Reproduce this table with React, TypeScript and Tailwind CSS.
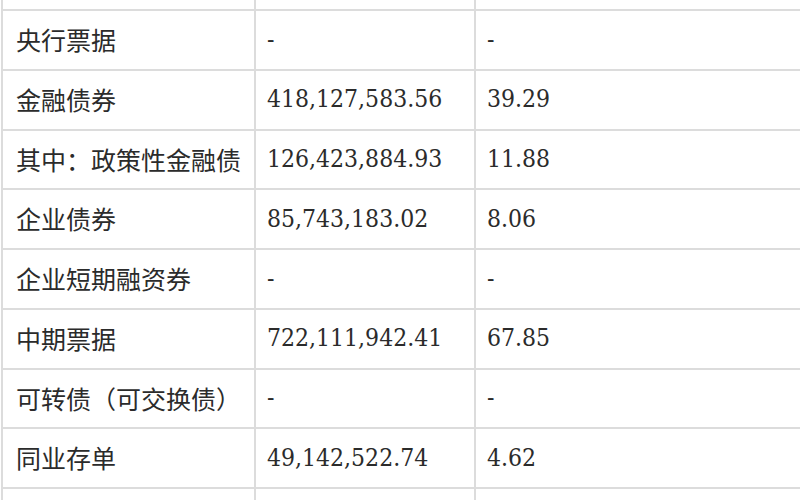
const rows: [string, string, string][] = [
  ["央行票据", "-", "-"],
  ["金融债券", "418,127,583.56", "39.29"],
  ["其中：政策性金融债", "126,423,884.93", "11.88"],
  ["企业债券", "85,743,183.02", "8.06"],
  ["企业短期融资券", "-", "-"],
  ["中期票据", "722,111,942.41", "67.85"],
  ["可转债（可交换债）", "-", "-"],
  ["同业存单", "49,142,522.74", "4.62"],
];

const cn = "font-['Noto_Sans_CJK_SC',sans-serif] text-[25px]";
const num = "font-['DejaVu_Serif','Liberation_Serif',serif] font-stretch-condensed text-[24.5px]";

export default function App() {
  return (
    <div className="w-[800px] h-[500px] overflow-hidden bg-white text-[#2b2b2b]">
      <div className="ml-[1px] border-l-2 border-[#dcdcdc]">
        {/* row cut off at the top */}
        <div className="grid grid-cols-[253px_220px_1fr] h-[11px] border-b-2 border-[#dcdcdc]">
          <div className="border-r-2 border-[#dcdcdc]" />
          <div className="border-r-2 border-[#dcdcdc]" />
          <div />
        </div>

        {rows.map(([name, amount, pct]) => (
          <div
            key={name}
            className="grid grid-cols-[253px_220px_1fr] h-[59.75px] border-b-2 border-[#dcdcdc]"
          >
            <div className={`flex items-center pl-[13px] border-r-2 border-[#dcdcdc] whitespace-nowrap ${cn}`}>
              {name}
            </div>
            <div className={`flex items-center pl-[11px] border-r-2 border-[#dcdcdc] ${num}`}>
              {amount}
            </div>
            <div className={`flex items-center pl-[11px] ${num}`}>{pct}</div>
          </div>
        ))}

        {/* row cut off at the bottom */}
        <div className="grid grid-cols-[253px_220px_1fr] h-[40px]">
          <div className="border-r-2 border-[#dcdcdc]" />
          <div className="border-r-2 border-[#dcdcdc]" />
          <div />
        </div>
      </div>
    </div>
  );
}
